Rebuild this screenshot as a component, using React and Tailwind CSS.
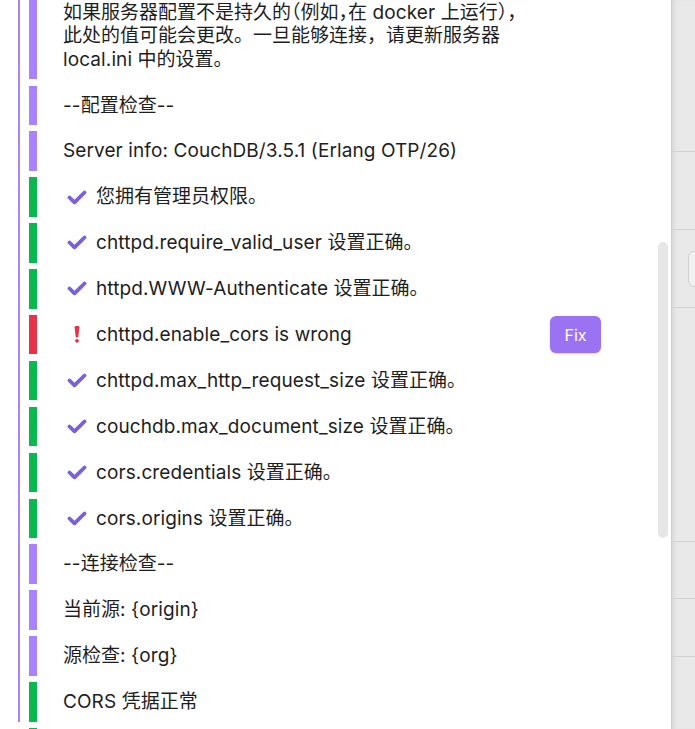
import React from "react";

const PURPLE = "border-[#a882ff]";
const GREEN = "border-[#08b94e]";
const RED = "border-[#e93147]";

function T({ children }) {
  const s = String(children);
  const parts = s.split(/([\u3000-\u9fff\uff00-\uffef]+)/).filter((p) => p !== "");
  return (
    <>
      {parts.map((p, i) =>
        /[\u3000-\u9fff\uff00-\uffef]/.test(p) ? (
          <span key={i}>{p}</span>
        ) : (
          <span key={i} className="tracking-[0.1px]">{p}</span>
        )
      )}
    </>
  );
}

function Check() {
  return (
    <svg width="20" height="15" viewBox="0 0 20 15" className="ml-[4px] block">
      <path d="M2.5 7.5 L7.5 12.3 L17.5 2.5" fill="none" stroke="#7b5fe0" strokeWidth="3.8" strokeLinecap="round" strokeLinejoin="round" />
    </svg>
  );
}

function Bang() {
  return (
    <svg width="6" height="17" viewBox="0 0 6 17" className="ml-[11px] block">
      <path d="M0.6 1.2 Q0.6 0 2 0 H4 Q5.4 0 5.4 1.2 L4.3 10.8 Q4.2 11.6 3.4 11.6 H2.6 Q1.8 11.6 1.7 10.8 Z" fill="#e93147" />
      <circle cx="3" cy="14.8" r="1.9" fill="#e93147" />
    </svg>
  );
}

function Row({ color, icon, text, extra }) {
  return (
    <div className={`border-l-[8px] ${color} pl-[26px] py-[8px]`}>
      <div className="flex items-center h-[23.5px]">
        {icon ? <div className="w-[33px] shrink-0 flex items-center">{icon}</div> : null}
        <div className="flex-1 whitespace-nowrap">
          <T>{text}</T>
        </div>
        {extra}
      </div>
    </div>
  );
}

export default function App() {
  const font = { fontFamily: 'Inter, "Noto Sans CJK SC", sans-serif' };
  return (
    <div className="w-[695px] h-[729px] overflow-hidden flex bg-white" style={font}>
      <div className="relative w-[671px] shrink-0 h-[729px] overflow-hidden bg-white pl-[18px] pr-[70px]">
        <div className="h-full border-l-[2px] border-[#a882ff] pl-[9px]">
          <div className="mt-[-7.4px] flex flex-col gap-[6.4px] text-[19px] leading-[23.5px] text-[#1e1e1e]">
            <div className={`border-l-[8px] ${PURPLE} pl-[26px] py-[8px] whitespace-nowrap`}>
              <div className="[font-feature-settings:'halt']"><T>如果服务器配置不是持久的（例如，在 docker 上运行），</T></div>
              <div><T>此处的值可能会更改。一旦能够连接，请更新服务器</T></div>
              <div><T>local.ini 中的设置。</T></div>
            </div>
            <Row color={PURPLE} text="--配置检查--" />
            <Row color={PURPLE} text="Server info: CouchDB/3.5.1 (Erlang OTP/26)" />
            <Row color={GREEN} icon={<Check />} text="您拥有管理员权限。" />
            <Row color={GREEN} icon={<Check />} text="chttpd.require_valid_user 设置正确。" />
            <Row color={GREEN} icon={<Check />} text="httpd.WWW-Authenticate 设置正确。" />
            <Row
              color={RED}
              icon={<Bang />}
              text="chttpd.enable_cors is wrong"
              extra={
                <button className="h-[37px] w-[51px] shrink-0 rounded-[6px] bg-[#9b72f2] text-white text-[16px] leading-none shadow-[0_1px_2px_rgba(0,0,0,0.15)]">
                  Fix
                </button>
              }
            />
            <Row color={GREEN} icon={<Check />} text="chttpd.max_http_request_size 设置正确。" />
            <Row color={GREEN} icon={<Check />} text="couchdb.max_document_size 设置正确。" />
            <Row color={GREEN} icon={<Check />} text="cors.credentials 设置正确。" />
            <Row color={GREEN} icon={<Check />} text="cors.origins 设置正确。" />
            <Row color={PURPLE} text="--连接检查--" />
            <Row color={PURPLE} text="当前源: {origin}" />
            <Row color={PURPLE} text="源检查: {org}" />
            <Row color={GREEN} text="CORS 凭据正常" />
            <Row color={GREEN} text={"\u00a0"} />
          </div>
        </div>
        <div className="absolute left-[658px] top-[242px] w-[10px] h-[296px] rounded-full bg-[#e6e6e6]" />
      </div>
      <div className="flex-1 min-w-0 h-[729px] flex flex-col bg-[#e9e9e9] border-l border-[#cfcfcf] shadow-[inset_4px_0_4px_-2px_rgba(0,0,0,0.08)]">
        <div className="h-[152px] border-b border-[#d2d2d2]" />
        <div className="h-[78px] border-b border-[#d2d2d2]" />
        <div className="h-[78px] border-b border-[#d2d2d2] pt-[21px] pl-[16px]">
          <div className="h-[36px] w-[30px] rounded-[6px] border border-[#cfcfcf] bg-[#f1f1f1]" />
        </div>
        <div className="h-[234px] border-b border-[#d2d2d2]" />
        <div className="h-[57px] border-b border-[#d2d2d2]" />
        <div className="h-[58px] border-b border-[#d2d2d2]" />
        <div className="flex-1" />
      </div>
    </div>
  );
}
